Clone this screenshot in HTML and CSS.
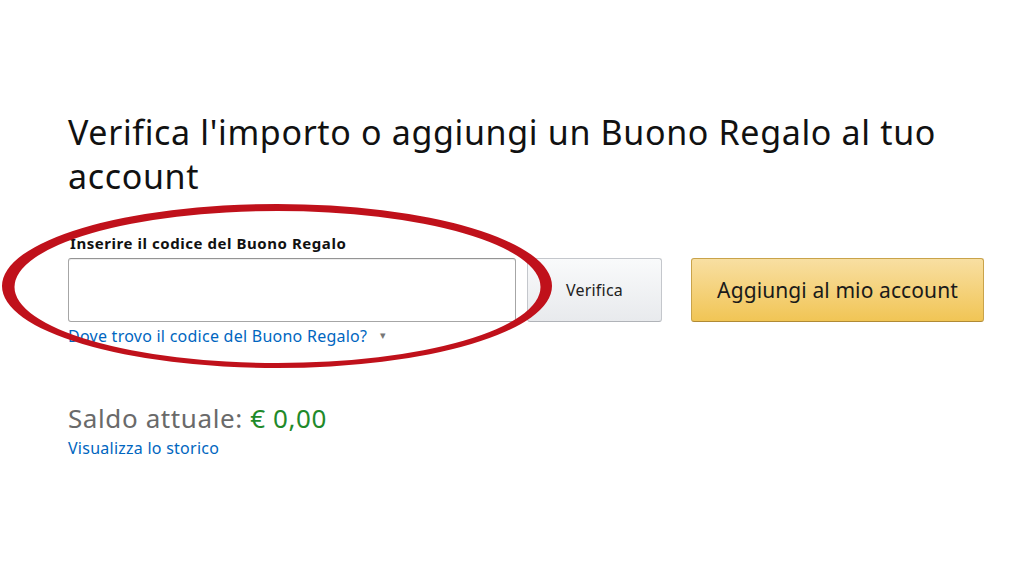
FILE: index.html
```html
<!DOCTYPE html>
<html lang="it">
<head>
<meta charset="utf-8">
<title>Buono Regalo</title>
<link rel="stylesheet" href="styles.css">
</head>
<body>
<main class="page">
  <h1 class="title">Verifica l'importo o aggiungi un Buono Regalo al tuo account</h1>
  <section class="redeem">
    <label class="field-label" for="code">Inserire il codice del Buono Regalo</label>
    <div class="redeem-row">
      <input class="code-input" id="code" type="text">
      <button class="btn btn-secondary" type="button">Verifica</button>
      <button class="btn btn-primary" type="button">Aggiungi al mio account</button>
    </div>
    <a class="link help-link" href="#">Dove trovo il codice del Buono Regalo? <span class="caret">▾</span></a>
  </section>
  <section class="balance">
    <p class="balance-line">Saldo attuale: <span class="amount">€ 0,00</span></p>
    <a class="link" href="#">Visualizza lo storico</a>
  </section>
  <svg class="circle-mark" width="560" height="175" viewBox="0 0 560 175" aria-hidden="true">
    <path fill="#c0111b" fill-rule="evenodd" d="M2 87 A 275 82 0 1 0 552 87 A 275 82 0 1 0 2 87 Z M14.5 88 A 263 76 0 1 0 540.5 88 A 263 76 0 1 0 14.5 88 Z"/>
  </svg>
</main>
</body>
</html>
```
FILE: styles.css
```css
html, body {
  margin: 0;
  padding: 0;
  background: #ffffff;
}

body {
  font-family: "Noto Sans", "Open Sans", "Liberation Sans", sans-serif;
  color: #111111;
  width: 1024px;
  height: 576px;
  overflow: hidden;
}

.page {
  position: relative;
  padding: 110px 0 0 68px;
  width: 920px;
}

.title {
  margin: 0;
  font-size: 34px;
  line-height: 44px;
  font-weight: 400;
  letter-spacing: 0.65px;
  color: #111111;
  width: 900px;
}

.redeem {
  margin-top: 36px;
  display: flex;
  flex-direction: column;
  align-items: flex-start;
}

.field-label {
  font-size: 15px;
  line-height: 18px;
  font-weight: 700;
  letter-spacing: 0.55px;
  color: #111111;
  padding-left: 2px;
}

.redeem-row {
  display: flex;
  margin-top: 6px;
  height: 64px;
}

.code-input {
  box-sizing: border-box;
  width: 448px;
  height: 64px;
  margin: 0;
  border: 1px solid #a6a6a6;
  border-top-color: #949494;
  border-radius: 3px;
  box-shadow: 0 1px 0 rgba(0,0,0,.07) inset;
  background: #fff;
}

.btn {
  box-sizing: border-box;
  height: 64px;
  margin: 0;
  border-radius: 3px;
  font-family: inherit;
  color: #111111;
  cursor: pointer;
}

.btn-secondary {
  width: 135px;
  margin-left: 11px;
  font-size: 16px;
  letter-spacing: 0.2px;
  border: 1px solid #c4c7cc;
  border-bottom-color: #b0b3b8;
  background: linear-gradient(to bottom, #f9fafb, #e8eaed);
  color: #222;
}

.btn-primary {
  width: 293px;
  margin-left: 29px;
  font-size: 21px;
  letter-spacing: 0.1px;
  border: 1px solid #c9a34a;
  border-bottom-color: #b08a35;
  background: linear-gradient(to bottom, #f8dfa2, #f1c555);
  color: #1a1a1a;
}

.link {
  color: #0066c0;
  text-decoration: none;
  font-size: 16px;
  line-height: 18px;
  letter-spacing: 0.25px;
}

.help-link {
  margin-top: 4px;
}

.caret {
  font-size: 11px;
  color: #777;
  margin-left: 8px;
  vertical-align: 3px;
}

.balance {
  margin-top: 58px;
  display: flex;
  flex-direction: column;
  align-items: flex-start;
}

.balance-line {
  margin: 0;
  font-size: 26px;
  line-height: 30px;
  letter-spacing: 0.6px;
  color: #6a6a6a;
}

.amount {
  color: #1f8a2a;
}

.balance .link {
  margin-top: 6px;
}

.circle-mark {
  position: absolute;
  left: 0;
  top: 199px;
  pointer-events: none;
}
```
